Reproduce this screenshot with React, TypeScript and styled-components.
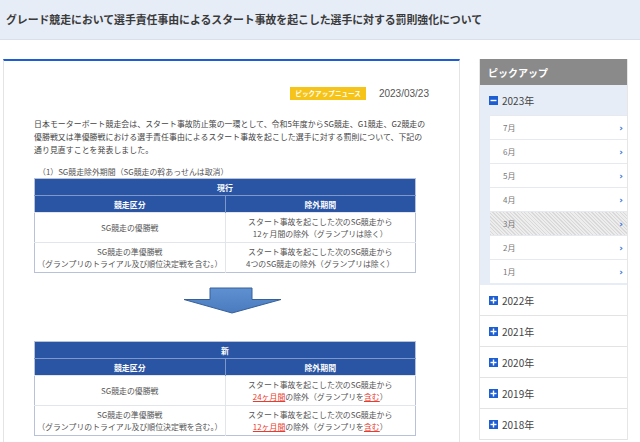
import React from "react";
import styled, { createGlobalStyle } from "styled-components";

const GlobalStyle = createGlobalStyle`
  html, body {
    margin: 0;
    padding: 0;
    background: #fff;
    font-family: "Noto Sans CJK JP", "Noto Sans", sans-serif;
    color: #444;
  }
`;

const Header = styled.header`
  height: 40px;
  box-sizing: border-box;
  display: flex;
  align-items: center;
  padding-left: 6px;
  padding-bottom: 2px;
  background: #e6edf7;
  border-bottom: 1px solid #d9e0ea;
`;

const Title = styled.h1`
  margin: 0;
  font-size: 10.9px;
  font-weight: 700;
  color: #3a3a3a;
  letter-spacing: -0.05px;
`;

const Layout = styled.div`
  display: flex;
  align-items: flex-start;
  padding: 19px 0 0 3px;
  gap: 19px;
`;

const Card = styled.main`
  width: 457px;
  box-sizing: border-box;
  border-top: 2px solid #1c5cd4;
  border-left: 1px solid #e4e4e4;
  border-right: 1px solid #e4e4e4;
  padding: 26px 30px 20px 30px;
  min-height: 400px;
`;

const Meta = styled.div`
  display: flex;
  justify-content: flex-end;
  align-items: center;
  gap: 13px;
`;

const Badge = styled.span`
  display: inline-block;
  background: #f6c319;
  color: #fff;
  font-size: 6.6px;
  font-weight: 700;
  padding: 2px 5px;
  line-height: 9px;
`;

const DateText = styled.span`
  font-family: "Liberation Sans", Arial, sans-serif;
  font-size: 10px;
  color: #555;
`;

const Lead = styled.p`
  margin: 17px 0 0 0;
  font-size: 7.9px;
  line-height: 13px;
  color: #444;
  letter-spacing: 0.05px;
`;

const Caption = styled.p`
  margin: 10px 0 0 4px;
  font-size: 7.9px;
  line-height: 12px;
  color: #555;
`;

const Table = styled.table`
  width: 382px;
  border-collapse: collapse;
  border: 1px solid #b7c2d8;
  font-size: 7.9px;
  color: #555;
`;

const TitleCell = styled.th`
  background: #2a55a4;
  color: #fff;
  font-weight: 700;
  height: 16px;
  padding: 0;
  border-bottom: 1px solid #7d98c9;
`;

const HeadCell = styled.th`
  background: #2a55a4;
  color: #fff;
  font-weight: 700;
  height: 16px;
  padding: 0;
  width: 50%;
  & + & {
    border-left: 1px solid #7d98c9;
  }
`;

const Cell = styled.td`
  text-align: center;
  height: 29px;
  padding: 0;
  line-height: 12px;
  border-top: 1px solid #e2e5ea;
  & + & {
    border-left: 1px solid #e2e5ea;
  }
`;

const Red = styled.span`
  color: #ea3b2f;
  text-decoration: underline;
`;

const ArrowWrap = styled.div`
  width: 382px;
  display: flex;
  justify-content: center;
  padding: 14px 0 26px 16px;
  box-sizing: border-box;
`;

const Side = styled.aside`
  width: 147px;
  border-left: 1px solid #e6e6e6;
  border-right: 1px solid #e6e6e6;
`;

const SideHead = styled.div`
  height: 26px;
  background: #8a8a8a;
  color: #fff;
  font-size: 10px;
  font-weight: 700;
  display: flex;
  align-items: center;
  padding-left: 8px;
`;

const YearOpen = styled.div`
  background: #e6edf7;
  padding-bottom: 2px;
`;

const YearRow = styled.div<{ $open?: boolean }>`
  height: 30px;
  display: flex;
  align-items: center;
  gap: 4px;
  padding-left: 9px;
  font-size: 10px;
  color: #444;
  border-bottom: ${(p) => (p.$open ? "none" : "1px solid #e3e3e3")};
  background: ${(p) => (p.$open ? "#e6edf7" : "#fff")};
`;

const Months = styled.ul`
  list-style: none;
  margin: 0 0 0 10px;
  padding: 0;
  background: #fff;
`;

const Month = styled.li<{ $active?: boolean }>`
  height: 23px;
  border-top: 1px solid #e6e9ee;
  display: flex;
  align-items: center;
  justify-content: space-between;
  padding: 0 4px 0 13px;
  font-size: 8px;
  color: #777;
  background: ${(p) =>
    p.$active
      ? "repeating-linear-gradient(45deg, #d9d9d9 0px, #d9d9d9 1px, #ededed 1px, #ededed 2.5px)"
      : "#fff"};
`;

const Chevron = styled.span`
  color: #2f6fd6;
  font-size: 9px;
  font-weight: 700;
  font-family: "DejaVu Sans", sans-serif;
`;

const Toggle = ({ open }: { open?: boolean }) => (
  <svg width="9" height="9" viewBox="0 0 9 9">
    <rect x="0" y="0" width="9" height="9" fill="#1d5fd2" />
    <rect x="1.5" y="3.8" width="6" height="1.4" fill="#fff" />
    {!open && <rect x="3.8" y="1.5" width="1.4" height="6" fill="#fff" />}
  </svg>
);

const Arrow = () => (
  <svg width="100" height="28" viewBox="0 0 100 28">
    <defs>
      <linearGradient id="ag" x1="0" y1="0" x2="0" y2="1">
        <stop offset="0" stopColor="#5f90d0" />
        <stop offset="1" stopColor="#4a7bbf" />
      </linearGradient>
    </defs>
    <polygon
      points="27,1 69,1 69,12.5 98,12.5 49,26 1,12.5 27,12.5"
      fill="url(#ag)"
      stroke="#37609a"
      strokeWidth="1"
    />
  </svg>
);

const months = ["7月", "6月", "5月", "4月", "3月", "2月", "1月"];
const years = ["2022年", "2021年", "2020年", "2019年", "2018年"];

const RuleTable = ({ title, rows }: { title: string; rows: React.ReactNode[][] }) => (
  <Table>
    <tbody>
      <tr>
        <TitleCell colSpan={2}>{title}</TitleCell>
      </tr>
      <tr>
        <HeadCell>競走区分</HeadCell>
        <HeadCell>除外期間</HeadCell>
      </tr>
      {rows.map((r, i) => (
        <tr key={i}>
          <Cell>{r[0]}</Cell>
          <Cell>{r[1]}</Cell>
        </tr>
      ))}
    </tbody>
  </Table>
);

const left1 = "SG競走の優勝戦";
const left2 = (
  <>
    SG競走の準優勝戦
    <br />
    （グランプリのトライアル及び順位決定戦を含む。）
  </>
);

export default function App() {
  return (
    <>
      <GlobalStyle />
      <Header>
        <Title>グレード競走において選手責任事由によるスタート事故を起こした選手に対する罰則強化について</Title>
      </Header>
      <Layout>
        <Card>
          <Meta>
            <Badge>ピックアップニュース</Badge>
            <DateText>2023/03/23</DateText>
          </Meta>
          <Lead>
            日本モーターボート競走会は、スタート事故防止策の一環として、令和5年度からSG競走、G1競走、G2競走の
            優勝戦又は準優勝戦における選手責任事由によるスタート事故を起こした選手に対する罰則について、下記の
            通り見直すことを発表しました。
          </Lead>
          <Caption>（1）SG競走除外期間（SG競走の斡あっせんは取消）</Caption>
          <RuleTable
            title="現行"
            rows={[
              [
                left1,
                <>
                  スタート事故を起こした次のSG競走から
                  <br />
                  12ヶ月間の除外（グランプリは除く）
                </>,
              ],
              [
                left2,
                <>
                  スタート事故を起こした次のSG競走から
                  <br />
                  4つのSG競走の除外（グランプリは除く）
                </>,
              ],
            ]}
          />
          <ArrowWrap>
            <Arrow />
          </ArrowWrap>
          <RuleTable
            title="新"
            rows={[
              [
                left1,
                <>
                  スタート事故を起こした次のSG競走から
                  <br />
                  <Red>24ヶ月間</Red>の除外（グランプリを<Red>含む</Red>）
                </>,
              ],
              [
                left2,
                <>
                  スタート事故を起こした次のSG競走から
                  <br />
                  <Red>12ヶ月間</Red>の除外（グランプリを<Red>含む</Red>）
                </>,
              ],
            ]}
          />
        </Card>
        <Side>
          <SideHead>ピックアップ</SideHead>
          <YearOpen>
            <YearRow $open>
              <Toggle open />
              2023年
            </YearRow>
            <Months>
              {months.map((m) => (
                <Month key={m} $active={m === "3月"}>
                  {m}
                  <Chevron>›</Chevron>
                </Month>
              ))}
            </Months>
          </YearOpen>
          {years.map((y) => (
            <YearRow key={y}>
              <Toggle />
              {y}
            </YearRow>
          ))}
        </Side>
      </Layout>
    </>
  );
}
